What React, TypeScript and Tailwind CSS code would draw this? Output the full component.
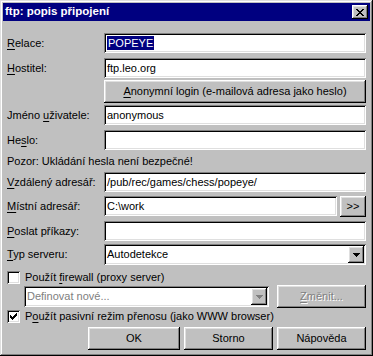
import React from "react";

const raised =
  "shadow-[inset_-1px_-1px_0_#000,inset_1px_1px_0_#fff,inset_-2px_-2px_0_#808080,inset_2px_2px_0_#dfdfdf]";
const sunken =
  "shadow-[inset_1px_1px_0_#808080,inset_-1px_-1px_0_#fff,inset_2px_2px_0_#000,inset_-2px_-2px_0_#dfdfdf]";

function Field({ children, className = "" }: { children?: React.ReactNode; className?: string }) {
  return (
    <div className={`h-[20px] bg-white ${sunken} flex items-center pl-[3px] text-black whitespace-nowrap overflow-hidden ${className}`}>
      {children}
    </div>
  );
}

function Row({ label, children, className = "" }: { label: React.ReactNode; children: React.ReactNode; className?: string }) {
  return (
    <div className={`flex items-center ${className}`}>
      <div className="w-[97px] shrink-0 whitespace-nowrap">{label}</div>
      <div className="flex-1 min-w-0">{children}</div>
    </div>
  );
}

function Arrow({ disabled = false }: { disabled?: boolean }) {
  return (
    <div className={`w-[16px] h-[17px] bg-[#c0c0c0] ${raised} flex items-center justify-center`}>
      <svg width="7" height="4" viewBox="0 0 7 4" shapeRendering="crispEdges">
        <path d="M0 0h7v1H0zM1 1h5v1H1zM2 2h3v1H2zM3 3h1v1H3z" fill={disabled ? "#808080" : "#000"} />
      </svg>
    </div>
  );
}

function Checkbox({ checked }: { checked: boolean }) {
  return (
    <div className={`w-[13px] h-[13px] bg-white ${sunken} flex items-center justify-center shrink-0`}>
      {checked && (
        <svg width="7" height="7" viewBox="0 0 7 7" shapeRendering="crispEdges">
          <path d="M6 0h1v3H6zM5 1h1v3H5zM4 2h1v3H4zM3 3h1v3H3zM2 4h1v3H2zM1 3h1v3H1zM0 2h1v3H0z" fill="#000" />
        </svg>
      )}
    </div>
  );
}

function Button({ children, className = "" }: { children: React.ReactNode; className?: string }) {
  return (
    <div className={`h-[23px] bg-[#c0c0c0] ${raised} flex items-center justify-center whitespace-nowrap ${className}`}>
      {children}
    </div>
  );
}

const U = ({ children }: { children: React.ReactNode }) => <span className="underline underline-offset-[2px]">{children}</span>;

export default function App() {
  return (
    <div className="w-[373px] h-[356px] bg-[#c0c0c0] p-[3px] font-['Liberation_Sans',Arial,sans-serif] text-[11px] text-black leading-none shadow-[inset_-1px_-1px_0_#000,inset_1px_1px_0_#dfdfdf,inset_-2px_-2px_0_#808080,inset_2px_2px_0_#fff] flex flex-col">
      {/* Title bar */}
      <div className="h-[18px] bg-[#000080] flex items-center justify-between pl-[2px] pr-[2px]">
        <span className="text-white font-bold text-[11.5px]">ftp: popis připojení</span>
        <div className={`w-[16px] h-[14px] bg-[#c0c0c0] ${raised} flex items-center justify-center`}>
          <svg width="8" height="7" viewBox="0 0 8 7" shapeRendering="crispEdges">
            <path d="M0 0h2v1H0zM6 0h2v1H6zM1 1h2v1H1zM5 1h2v1H5zM2 2h4v1H2zM3 3h2v1H3zM2 4h4v1H2zM1 5h2v1H1zM5 5h2v1H5zM0 6h2v1H0zM6 6h2v1H6z" fill="#000" />
          </svg>
        </div>
      </div>

      {/* Body */}
      <div className="flex flex-col pt-[12px] pl-[4px] pr-[4px]">
        <Row label={<><U>R</U>elace:</>} className="h-[20px]">
          <Field className="pl-[2px]">
            <span className="bg-[#000080] text-white px-[1px] h-[14px] flex items-center">POPEYE</span>
          </Field>
        </Row>
        <Row label={<><U>H</U>ostitel:</>} className="h-[20px] mt-[5px]">
          <Field>ftp.leo.org</Field>
        </Row>
        <Row label="" className="h-[23px] mt-[2px]">
          <Button><U>A</U>nonymní login (e-mailová adresa jako heslo)</Button>
        </Row>
        <Row label={<>Jméno <U>u</U>živatele:</>} className="h-[20px] mt-[2px]">
          <Field>anonymous</Field>
        </Row>
        <Row label={<>He<U>s</U>lo:</>} className="h-[20px] mt-[5px]">
          <Field />
        </Row>
        <div className="h-[22px] flex items-center whitespace-nowrap">Pozor: Ukládání hesla není bezpečné!</div>
        <Row label={<><U>V</U>zdálený adresář:</>} className="h-[20px]">
          <Field>/pub/rec/games/chess/popeye/</Field>
        </Row>
        <Row label={<><U>M</U>ístní adresář:</>} className="h-[21px] mt-[4px]">
          <div className="flex items-start h-[21px]">
            <Field className="flex-1">C:\work</Field>
            <div className={`ml-[3px] w-[26px] h-[21px] bg-[#c0c0c0] ${raised} flex items-center justify-center text-[11px]`}>
              &gt;&gt;
            </div>
          </div>
        </Row>
        <Row label={<><U>P</U>oslat příkazy:</>} className="h-[20px] mt-[4px]">
          <Field />
        </Row>
        <Row label={<><U>T</U>yp serveru:</>} className="h-[21px] mt-[3px]">
          <div className={`h-[21px] bg-white ${sunken} flex items-center justify-between pl-[3px] pr-[2px]`}>
            <span>Autodetekce</span>
            <Arrow />
          </div>
        </Row>
        <div className="flex items-center h-[13px] mt-[6px]">
          <Checkbox checked={false} />
          <span className="ml-[5px] whitespace-nowrap">Použít <U>f</U>irewall (proxy server)</span>
        </div>
        <div className="flex items-center h-[21px] mt-[2px] pl-[17px]">
          <div className={`w-[245px] h-[21px] bg-white ${sunken} flex items-center justify-between pl-[3px] pr-[2px]`}>
            <span className="text-[#808080]">Definovat nové...</span>
            <Arrow disabled />
          </div>
          <div className="flex-1" />
          <Button className="w-[89px] h-[21px] text-[#808080] [text-shadow:1px_1px_0_#fff]">
            <U>Z</U>měnit...
          </Button>
        </div>
        <div className="flex items-center h-[13px] mt-[3px]">
          <Checkbox checked={true} />
          <span className="ml-[5px] whitespace-nowrap">P<U>o</U>užít pasivní režim přenosu (jako WWW browser)</span>
        </div>
        <div className="flex justify-end gap-[4px] mt-[4px]">
          <Button className="w-[92px]">OK</Button>
          <Button className="w-[89px]">Storno</Button>
          <Button className="w-[89px]">Nápověda</Button>
        </div>
      </div>
    </div>
  );
}
